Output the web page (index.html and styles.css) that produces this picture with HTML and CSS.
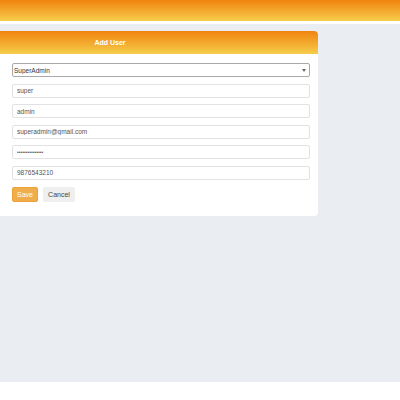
FILE: index.html
```html
<!DOCTYPE html>
<html>
<head>
    <title>Add User</title>
    <meta name="viewport" content="width=device-width" />
    <link rel="stylesheet" href="styles.css">
</head>
<body>
    <div class="topbar"></div>
    <div class="main">
        <div class="card">
            <div class="card-head">
                <h1>Add User</h1>
            </div>
            <form class="card-body">
                <div class="select-wrap">
                    <select class="field select">
                        <option>SuperAdmin</option>
                        <option>Admin</option>
                        <option>User</option>
                    </select>
                </div>
                <input class="field" type="text" value="super" />
                <input class="field" type="text" value="admin" />
                <input class="field" type="email" value="superadmin@gmail.com" />
                <input class="field password" type="password" value="superadmin12345" />
                <input class="field" type="text" value="9876543210" />
                <div class="actions">
                    <button type="button" class="btn btn-save">Save</button>
                    <button type="button" class="btn btn-cancel">Cancel</button>
                </div>
            </form>
        </div>
    </div>
</body>
</html>
```

FILE: styles.css
```css
body {
    margin: 0px;
    background-color: #fff;
    font-family: "Liberation Sans", Arial, sans-serif;
    color: #555;
}
.topbar {
    height: 21px;
    background: linear-gradient(#f0840f, #f6cd4b);
}
.main {
    margin-top: 3px;
    height: 358px;
    background-color: #eaedf2;
    padding-top: 7px;
    box-sizing: border-box;
}
.card {
    width: 318px;
    height: 185px;
    background-color: #fff;
    border-radius: 0 4px 4px 0;
}
.card-head {
    height: 23px;
    border-radius: 0 4px 0 0;
    background: linear-gradient(#f0840f, #f6cd4b);
    display: flex;
    align-items: center;
    justify-content: center;
    padding-right: 100px;
}
h1 {
    margin: 0px;
    font-size: 7px;
    font-weight: bold;
    color: #fff;
    padding-left: 2px;
}
.card-body {
    margin: 0px;
    padding: 9px 8px 0 12px;
    display: flex;
    flex-direction: column;
    gap: 6.5px;
}
.field {
    height: 14px;
    box-sizing: border-box;
    margin: 0px;
    padding: 0 4px;
    border: 1px solid #e2e2e2;
    border-radius: 2px;
    font-family: inherit;
    font-size: 6.5px;
    color: #555;
    background-color: #fff;
    outline: none;
}
.select-wrap {
    position: relative;
    display: flex;
    flex-direction: column;
}
.select-wrap::after {
    content: "";
    position: absolute;
    right: 4px;
    top: 6px;
    border-left: 2.5px solid transparent;
    border-right: 2.5px solid transparent;
    border-top: 3px solid #666;
    pointer-events: none;
}
.select {
    -webkit-appearance: none;
    appearance: none;
    padding: 0 1px;
    border-color: #a9a9a9;
    color: #333;
}
.password {
    font-size: 5px;
    letter-spacing: 0px;
    padding-left: 4px;
}
.actions {
    display: flex;
    gap: 5px;
    margin-top: 0.5px;
}
.btn {
    height: 15px;
    padding: 0;
    border: 1px solid transparent;
    border-radius: 2px;
    font-family: inherit;
    font-size: 7px;
}
.btn-save {
    width: 26px;
    background-color: #f0ad4e;
    border-color: #eea236;
    color: #fff;
}
.btn-cancel {
    width: 32px;
    background-color: #efefef;
    color: #444;
}
```
